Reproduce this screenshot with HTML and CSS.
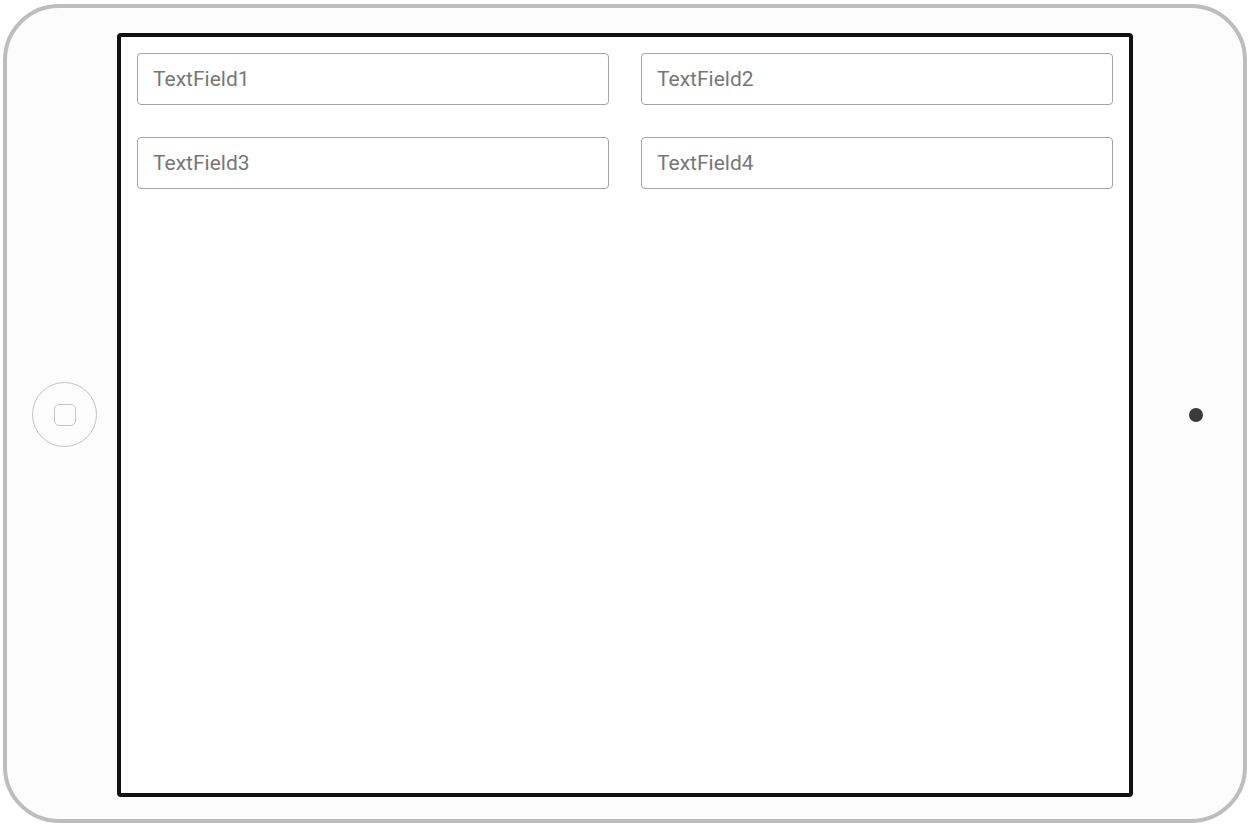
FILE: index.html
```html
<!DOCTYPE html>
<html>
<head>
<meta charset="utf-8">
<link rel="stylesheet" href="styles.css">
</head>
<body>
<div class="device">
  <div class="home"><div class="home-key"></div></div>
  <div class="screen">
    <div class="grid">
      <div class="field">TextField1</div>
      <div class="field">TextField2</div>
      <div class="field">TextField3</div>
      <div class="field">TextField4</div>
    </div>
  </div>
  <div class="camera"></div>
</div>
</body>
</html>
```
FILE: styles.css
```css
html, body {
  margin: 0;
  padding: 0;
  background: #ffffff;
  font-family: Roboto, "Liberation Sans", sans-serif;
}
.device {
  box-sizing: border-box;
  width: 1244px;
  height: 819px;
  margin: 4px 0 0 3px;
  border: 4px solid #bdbdbd;
  border-radius: 56px;
  background: #fcfcfc;
  display: flex;
  align-items: center;
  padding-left: 25px;
}
.home {
  box-sizing: border-box;
  width: 65px;
  height: 65px;
  border: 1px solid #c4c4c4;
  border-radius: 50%;
  display: flex;
  align-items: center;
  justify-content: center;
  margin-top: 2px;
  margin-right: 20px;
}
.home-key {
  box-sizing: border-box;
  width: 22px;
  height: 22px;
  border: 1px solid #c4c4c4;
  border-radius: 5px;
}
.screen {
  box-sizing: border-box;
  align-self: flex-start;
  margin-top: 25px;
  width: 1016px;
  height: 764px;
  border: 4px solid #111111;
  border-radius: 4px;
  background: #ffffff;
  padding: 16px;
}
.grid {
  display: grid;
  grid-template-columns: 472px 472px;
  column-gap: 32px;
  row-gap: 32px;
}
.field {
  box-sizing: border-box;
  height: 52px;
  border: 1px solid #a3a3a3;
  border-radius: 4px;
  padding-left: 15px;
  display: flex;
  align-items: center;
  font-size: 21px;
  color: #777777;
}
.camera {
  width: 14px;
  height: 14px;
  border-radius: 50%;
  background: #3a3a3a;
  margin-left: 56px;
  margin-top: 2px;
}
```
